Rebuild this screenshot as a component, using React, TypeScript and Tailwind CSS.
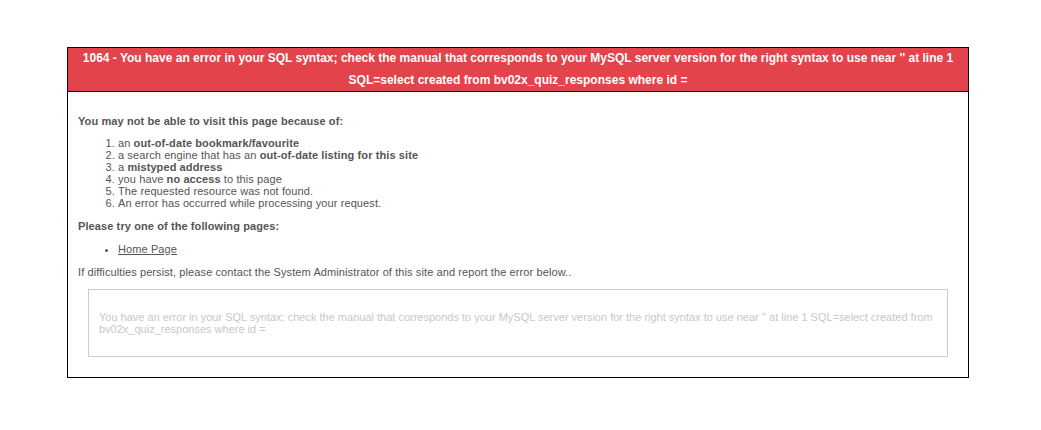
import React from "react";

export default function App() {
  return (
    <div className="min-h-[430px] w-full bg-white pt-[47px] font-['Liberation_Sans',Arial,sans-serif]">
      <div className="ml-[67px] w-[902px] border border-black">
        <div className="border-b border-black bg-[#e3434a] text-center text-[12px] font-bold leading-[21.5px] text-white">
          1064 - You have an error in your SQL syntax; check the manual that corresponds to your MySQL server version for the right syntax to use near '' at line 1
          <br />
          SQL=select created from bv02x_quiz_responses where id =
        </div>
        <div className="px-[10px] pb-[20px] pt-[23px] text-[11px] leading-[12px] tracking-[0.1px] text-[#555555]">
          <p className="font-bold">You may not be able to visit this page because of:</p>
          <ol className="mt-[10px] list-decimal pl-[40px]">
            <li>
              an <strong>out-of-date bookmark/favourite</strong>
            </li>
            <li>
              a search engine that has an <strong>out-of-date listing for this site</strong>
            </li>
            <li>
              a <strong>mistyped address</strong>
            </li>
            <li>
              you have <strong>no access</strong> to this page
            </li>
            <li>The requested resource was not found.</li>
            <li>An error has occurred while processing your request.</li>
          </ol>
          <p className="mt-[11px] font-bold">Please try one of the following pages:</p>
          <ul className="mt-[11px] list-disc pl-[40px]">
            <li>
              <a href="#" className="text-[#555555] underline">
                Home Page
              </a>
            </li>
          </ul>
          <p className="mt-[11px]">
            If difficulties persist, please contact the System Administrator of this site and report the error below..
          </p>
          <div className="mx-[10px] mt-[11px] border border-[#cccccc] px-[10px] pb-[21px] pt-[21px] tracking-normal text-[#c8c8c8]">
            <p>
              <span className="whitespace-nowrap">
                You have an error in your SQL syntax; check the manual that corresponds to your MySQL server version for the right syntax to use near '' at line 1 SQL=select created from
              </span>
              <br />
              bv02x_quiz_responses where id =
            </p>
          </div>
        </div>
      </div>
    </div>
  );
}
